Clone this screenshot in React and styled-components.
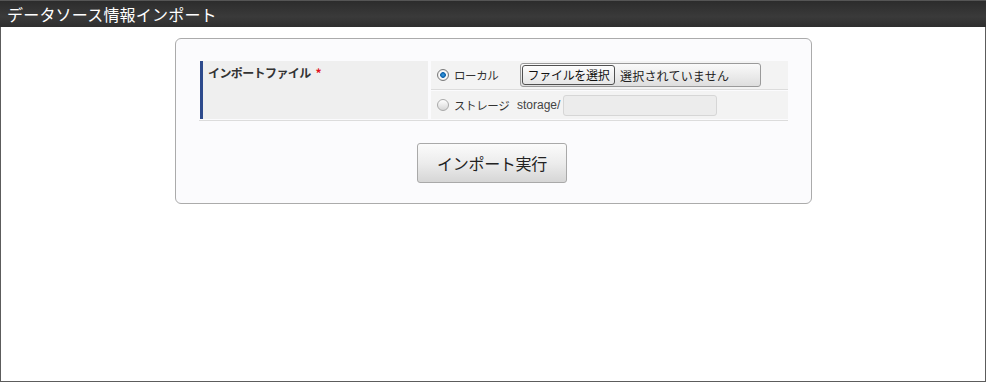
import React, { useState } from 'react'
import styled, { createGlobalStyle } from 'styled-components'

const GlobalStyle = createGlobalStyle`
  html, body {
    margin: 0;
    padding: 0;
    background: #ffffff;
  }
  body {
    font-family: "Liberation Sans", "Noto Sans CJK JP", sans-serif;
    color: #222;
  }
`

const Frame = styled.div`
  box-sizing: border-box;
  width: 986px;
  height: 382px;
  border: 1px solid #5c5c5c;
  border-top: none;
  background: #fff;
  display: flex;
  flex-direction: column;
`

const Header = styled.div`
  height: 27px;
  flex: none;
  display: flex;
  align-items: center;
  padding-left: 7px;
  margin: 0 -1px;
  background: linear-gradient(#2c2c2c, #3a3a3a 60%, #2e2e2e);
  border-top: 1px solid #555;
  box-sizing: border-box;
  color: #fff;
  font-size: 16px;
  font-family: "Noto Sans CJK JP", sans-serif;
  letter-spacing: 0.2px;
`

const Body = styled.div`
  padding: 11px 0 0 174px;
`

const Card = styled.div`
  box-sizing: border-box;
  width: 637px;
  border: 1px solid #ababab;
  border-radius: 6px;
  background: #fbfbfd;
  padding: 22px 22px 20px 22px;
  display: flex;
  flex-direction: column;
  align-items: center;
`

const FormTable = styled.div`
  width: 589px;
  display: grid;
  grid-template-columns: 229px 1fr;
  grid-template-rows: 29px 28px;
  column-gap: 3px;
  row-gap: 1px;
  border-bottom: 1px solid #dcdcdc;
  padding-bottom: 1px;
  align-self: flex-start;
  margin-left: 1px;
`

const LabelCell = styled.div`
  grid-row: 1 / span 2;
  background: #efefef;
  border-left: 3px solid #2d4a8c;
  margin-left: 1px;
  padding: 3px 5px;
  font-size: 12px;
  letter-spacing: -0.6px;
  font-weight: bold;
  color: #333;
  font-family: "Noto Sans CJK JP", sans-serif;
`

const Required = styled.span`
  color: #e0141e;
  margin-left: 5px;
`

const ValueCell = styled.div`
  background: #f3f3f3;
  display: flex;
  align-items: center;
  padding-left: 6px;
  border-bottom: ${p => (p.$line ? '1px solid #dcdcdc' : 'none')};
`

const RadioLabel = styled.label`
  flex: none;
  display: flex;
  align-items: center;
  gap: 5px;
  width: 83px;
  font-size: 11.5px;
  letter-spacing: -0.4px;
  color: #333;
  font-family: "Noto Sans CJK JP", sans-serif;
  cursor: pointer;
`

const RadioDot = styled.span`
  box-sizing: border-box;
  width: 12px;
  height: 12px;
  border-radius: 50%;
  border: 1px solid ${p => (p.$on ? '#7a7a7a' : '#a9a9a9')};
  background: ${p =>
    p.$on
      ? 'radial-gradient(circle, #3aa0e6 0, #0b5fa8 2.5px, #ffffff 3.2px, #e8e8e8 5px)'
      : 'linear-gradient(#ffffff, #d6d6d6)'};
`

const FilePicker = styled.div`
  box-sizing: border-box;
  width: 241px;
  height: 24px;
  display: flex;
  align-items: center;
  gap: 5px;
  padding-left: 1px;
  border: 1px solid #9a9a9a;
  border-radius: 3px;
  background: linear-gradient(#fafafa, #dedede);
  font-size: 12px;
  letter-spacing: 0.2px;
  font-family: "Noto Sans CJK JP", sans-serif;
  color: #222;
`

const FileButton = styled.button`
  box-sizing: border-box;
  width: 93px;
  height: 20px;
  padding: 0;
  border: 1px solid #505050;
  border-radius: 3px;
  background: linear-gradient(#fdfdfd, #e6e6e6);
  font-size: 12px;
  letter-spacing: -0.3px;
  font-family: "Noto Sans CJK JP", sans-serif;
  color: #111;
  line-height: 18px;
`

const Prefix = styled.span`
  margin-left: -3px;
  font-size: 12px;
  color: #444;
  margin-right: 3px;
`

const TextInput = styled.input`
  box-sizing: border-box;
  width: 154px;
  height: 21px;
  border: 1px solid #d6d6d6;
  border-radius: 3px;
  background: #ececec;
  outline: none;
`

const ExecButton = styled.button`
  margin: 22px 3px 0 0;
  box-sizing: border-box;
  width: 150px;
  height: 40px;
  border: 1px solid #a9a9a9;
  border-radius: 3px;
  background: linear-gradient(#fbfbfb, #ececec 50%, #d6d6d6);
  font-size: 16px;
  letter-spacing: -0.3px;
  font-family: "Noto Sans CJK JP", sans-serif;
  color: #222;
  cursor: pointer;
`

export default function App() {
  const [source, setSource] = useState('local')

  return (
    <>
      <GlobalStyle />
      <Frame>
        <Header>データソース情報インポート</Header>
        <Body>
          <Card>
            <FormTable>
              <LabelCell>
                インポートファイル<Required>*</Required>
              </LabelCell>
              <ValueCell $line>
                <RadioLabel onClick={() => setSource('local')}>
                  <RadioDot $on={source === 'local'} />
                  ローカル
                </RadioLabel>
                <FilePicker>
                  <FileButton>ファイルを選択</FileButton>
                  選択されていません
                </FilePicker>
              </ValueCell>
              <ValueCell>
                <RadioLabel onClick={() => setSource('storage')}>
                  <RadioDot $on={source === 'storage'} />
                  ストレージ
                </RadioLabel>
                <Prefix>storage/</Prefix>
                <TextInput />
              </ValueCell>
            </FormTable>
            <ExecButton>インポート実行</ExecButton>
          </Card>
        </Body>
      </Frame>
    </>
  )
}
